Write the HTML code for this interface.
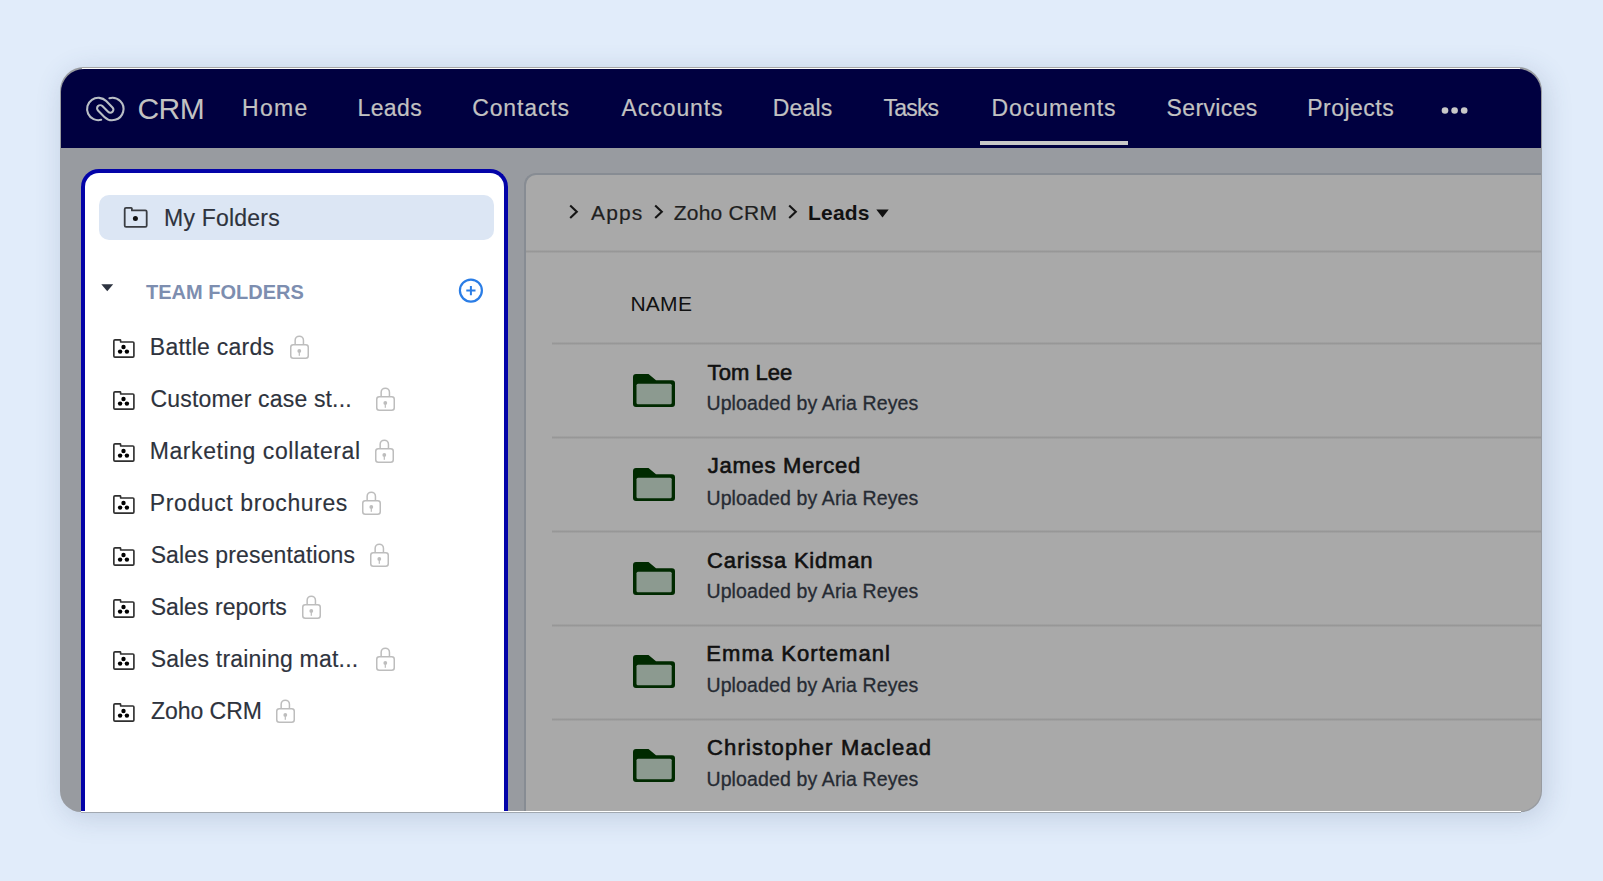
<!DOCTYPE html>
<html><head><meta charset="utf-8"><style>
html,body{margin:0;padding:0;}
body{width:1603px;height:881px;background:#e1ecfa;position:relative;overflow:hidden;font-family:"Liberation Sans", sans-serif;}
.t{position:absolute;white-space:nowrap;line-height:1;}
.frame{position:absolute;left:60px;top:67px;width:1482px;height:745px;border-radius:24px 24px 21px 21px;background:#989ba0;box-shadow:3px 5px 28px rgba(60,80,120,0.2);}
.topline{position:absolute;left:82px;top:67px;width:1438px;height:2px;background:linear-gradient(#a6a6a6 0 50%,#fcfcfa 50%);}
.hdr{position:absolute;left:61px;top:69px;width:1480px;height:79px;border-radius:23px 23px 0 0;background:#000040;}
.uline{position:absolute;left:980px;top:141px;width:148px;height:4px;background:#c8c8c8;}
.side{position:absolute;left:81px;top:169px;width:419px;height:638px;border:4px solid #0303a8;border-bottom:none;border-radius:18px 18px 0 0;background:#fff;box-sizing:content-box;}
.hl{position:absolute;left:99px;top:195px;width:395px;height:45px;border-radius:10px;background:#dce6f4;}
.main{position:absolute;left:524px;top:173px;width:1017px;height:638px;border-left:2px solid #878c93;border-top:2px solid #878c93;border-radius:12px 0 21px 0;box-sizing:border-box;width:1017px;height:638px;background:#a9a9a9;}
.mainr{position:absolute;left:1519px;top:700px;width:22px;height:111px;}
.sep{position:absolute;height:3px;background:linear-gradient(#a5a5a5,#979797,#a5a5a5);}
.bline{position:absolute;left:81px;top:811px;width:1440px;height:1px;background:#fff;}
.bline2{position:absolute;left:81px;top:812px;width:1440px;height:1px;background:rgba(120,120,120,0.5);}
</style></head><body>
<div class="frame"></div>
<div class="topline"></div>
<div class="hdr"></div>
<div class="uline"></div>
<div class="main"></div>
<div class="sep" style="left:526px;top:250px;width:1015px;"></div>
<div class="sep" style="left:552px;top:342px;width:989px;"></div>
<div class="sep" style="left:552px;top:436px;width:989px;"></div>
<div class="sep" style="left:552px;top:530px;width:989px;"></div>
<div class="sep" style="left:552px;top:624px;width:989px;"></div>
<div class="sep" style="left:552px;top:718px;width:989px;"></div>
<div class="side"></div>
<div class="hl"></div>
<div class="bline"></div><div class="bline2"></div>
<svg style="position:absolute;left:84px;top:94px" width="44" height="30" viewBox="0 0 44 30"><path d="M17.2 25.8 A11.2 11.2 0 1 1 22.22 7.08 L28.5 13.4 A3.1 3.1 0 0 1 24.1 17.8 L18.4 12.1 A3.1 3.1 0 0 0 14.0 16.5 L20.38 22.92 A11.2 11.2 0 1 0 25.4 4.18" fill="none" stroke="#b9bec5" stroke-width="2.1" stroke-linecap="round"/></svg>
<svg style="position:absolute;left:1440px;top:106px" width="30" height="10" viewBox="0 0 30 10"><circle cx="5" cy="4.5" r="3.3" fill="#c8c8c8"/><circle cx="14.6" cy="4.5" r="3.3" fill="#c8c8c8"/><circle cx="24.2" cy="4.5" r="3.3" fill="#c8c8c8"/></svg>
<svg style="position:absolute;left:123px;top:206px" width="26" height="23" viewBox="0 0 26 23"><path d="M1.7 3.3 Q1.7 1.9 3.1 1.9 H8.2 Q8.9 1.9 8.9 2.6 V4.4 H22.3 Q23.7 4.4 23.7 5.8 V19.4 Q23.7 20.8 22.3 20.8 H3.1 Q1.7 20.8 1.7 19.4 Z" fill="none" stroke="#3a3d42" stroke-width="1.8" stroke-linejoin="round"/><circle cx="12.4" cy="12.5" r="2.5" fill="#111"/></svg>
<svg style="position:absolute;left:101px;top:284px" width="13" height="8" viewBox="0 0 13 8"><path d="M0.3 0.3 H12.2 L6.25 7.2 Z" fill="#2d3340"/></svg>
<svg style="position:absolute;left:458px;top:278px" width="26" height="26" viewBox="0 0 26 26"><circle cx="12.9" cy="12.6" r="11" fill="none" stroke="#2a7de6" stroke-width="2.2"/><path d="M8.3 12.6 H17.5 M12.9 8 V17.2" stroke="#2a7de6" stroke-width="2"/></svg>
<svg style="position:absolute;left:113px;top:339px" width="22" height="19" viewBox="0 0 22 19"><path d="M0.85 2 Q0.85 0.85 2 0.85 H7 Q7.6 0.85 7.6 1.5 V3 H19.8 Q20.9 3 20.9 4.1 V17 Q20.9 18.1 19.8 18.1 H2 Q0.85 18.1 0.85 17 Z" fill="none" stroke="#2f2f2f" stroke-width="1.65" stroke-linejoin="round"/><circle cx="10.5" cy="8" r="2.2" fill="#000"/><circle cx="7.1" cy="12.6" r="2.2" fill="#000"/><circle cx="13.9" cy="12.6" r="2.2" fill="#000"/></svg>
<svg style="position:absolute;left:113px;top:391px" width="22" height="19" viewBox="0 0 22 19"><path d="M0.85 2 Q0.85 0.85 2 0.85 H7 Q7.6 0.85 7.6 1.5 V3 H19.8 Q20.9 3 20.9 4.1 V17 Q20.9 18.1 19.8 18.1 H2 Q0.85 18.1 0.85 17 Z" fill="none" stroke="#2f2f2f" stroke-width="1.65" stroke-linejoin="round"/><circle cx="10.5" cy="8" r="2.2" fill="#000"/><circle cx="7.1" cy="12.6" r="2.2" fill="#000"/><circle cx="13.9" cy="12.6" r="2.2" fill="#000"/></svg>
<svg style="position:absolute;left:113px;top:443px" width="22" height="19" viewBox="0 0 22 19"><path d="M0.85 2 Q0.85 0.85 2 0.85 H7 Q7.6 0.85 7.6 1.5 V3 H19.8 Q20.9 3 20.9 4.1 V17 Q20.9 18.1 19.8 18.1 H2 Q0.85 18.1 0.85 17 Z" fill="none" stroke="#2f2f2f" stroke-width="1.65" stroke-linejoin="round"/><circle cx="10.5" cy="8" r="2.2" fill="#000"/><circle cx="7.1" cy="12.6" r="2.2" fill="#000"/><circle cx="13.9" cy="12.6" r="2.2" fill="#000"/></svg>
<svg style="position:absolute;left:113px;top:495px" width="22" height="19" viewBox="0 0 22 19"><path d="M0.85 2 Q0.85 0.85 2 0.85 H7 Q7.6 0.85 7.6 1.5 V3 H19.8 Q20.9 3 20.9 4.1 V17 Q20.9 18.1 19.8 18.1 H2 Q0.85 18.1 0.85 17 Z" fill="none" stroke="#2f2f2f" stroke-width="1.65" stroke-linejoin="round"/><circle cx="10.5" cy="8" r="2.2" fill="#000"/><circle cx="7.1" cy="12.6" r="2.2" fill="#000"/><circle cx="13.9" cy="12.6" r="2.2" fill="#000"/></svg>
<svg style="position:absolute;left:113px;top:547px" width="22" height="19" viewBox="0 0 22 19"><path d="M0.85 2 Q0.85 0.85 2 0.85 H7 Q7.6 0.85 7.6 1.5 V3 H19.8 Q20.9 3 20.9 4.1 V17 Q20.9 18.1 19.8 18.1 H2 Q0.85 18.1 0.85 17 Z" fill="none" stroke="#2f2f2f" stroke-width="1.65" stroke-linejoin="round"/><circle cx="10.5" cy="8" r="2.2" fill="#000"/><circle cx="7.1" cy="12.6" r="2.2" fill="#000"/><circle cx="13.9" cy="12.6" r="2.2" fill="#000"/></svg>
<svg style="position:absolute;left:113px;top:599px" width="22" height="19" viewBox="0 0 22 19"><path d="M0.85 2 Q0.85 0.85 2 0.85 H7 Q7.6 0.85 7.6 1.5 V3 H19.8 Q20.9 3 20.9 4.1 V17 Q20.9 18.1 19.8 18.1 H2 Q0.85 18.1 0.85 17 Z" fill="none" stroke="#2f2f2f" stroke-width="1.65" stroke-linejoin="round"/><circle cx="10.5" cy="8" r="2.2" fill="#000"/><circle cx="7.1" cy="12.6" r="2.2" fill="#000"/><circle cx="13.9" cy="12.6" r="2.2" fill="#000"/></svg>
<svg style="position:absolute;left:113px;top:651px" width="22" height="19" viewBox="0 0 22 19"><path d="M0.85 2 Q0.85 0.85 2 0.85 H7 Q7.6 0.85 7.6 1.5 V3 H19.8 Q20.9 3 20.9 4.1 V17 Q20.9 18.1 19.8 18.1 H2 Q0.85 18.1 0.85 17 Z" fill="none" stroke="#2f2f2f" stroke-width="1.65" stroke-linejoin="round"/><circle cx="10.5" cy="8" r="2.2" fill="#000"/><circle cx="7.1" cy="12.6" r="2.2" fill="#000"/><circle cx="13.9" cy="12.6" r="2.2" fill="#000"/></svg>
<svg style="position:absolute;left:113px;top:703px" width="22" height="19" viewBox="0 0 22 19"><path d="M0.85 2 Q0.85 0.85 2 0.85 H7 Q7.6 0.85 7.6 1.5 V3 H19.8 Q20.9 3 20.9 4.1 V17 Q20.9 18.1 19.8 18.1 H2 Q0.85 18.1 0.85 17 Z" fill="none" stroke="#2f2f2f" stroke-width="1.65" stroke-linejoin="round"/><circle cx="10.5" cy="8" r="2.2" fill="#000"/><circle cx="7.1" cy="12.6" r="2.2" fill="#000"/><circle cx="13.9" cy="12.6" r="2.2" fill="#000"/></svg>
<svg style="position:absolute;left:290px;top:335px" width="19" height="24" viewBox="0 0 19 24"><rect x="0.75" y="9.75" width="17.5" height="13.5" rx="2.5" fill="none" stroke="#bdbdbd" stroke-width="1.5"/><path d="M5.15 9.75 V5.3 A4.15 4.15 0 0 1 13.45 5.3 V9.75" fill="none" stroke="#bdbdbd" stroke-width="1.5"/><circle cx="9.3" cy="15.9" r="1.9" fill="#bdbdbd"/><rect x="8.7" y="16" width="1.2" height="4.8" fill="#bdbdbd"/></svg>
<svg style="position:absolute;left:376px;top:387px" width="19" height="24" viewBox="0 0 19 24"><rect x="0.75" y="9.75" width="17.5" height="13.5" rx="2.5" fill="none" stroke="#bdbdbd" stroke-width="1.5"/><path d="M5.15 9.75 V5.3 A4.15 4.15 0 0 1 13.45 5.3 V9.75" fill="none" stroke="#bdbdbd" stroke-width="1.5"/><circle cx="9.3" cy="15.9" r="1.9" fill="#bdbdbd"/><rect x="8.7" y="16" width="1.2" height="4.8" fill="#bdbdbd"/></svg>
<svg style="position:absolute;left:375px;top:439px" width="19" height="24" viewBox="0 0 19 24"><rect x="0.75" y="9.75" width="17.5" height="13.5" rx="2.5" fill="none" stroke="#bdbdbd" stroke-width="1.5"/><path d="M5.15 9.75 V5.3 A4.15 4.15 0 0 1 13.45 5.3 V9.75" fill="none" stroke="#bdbdbd" stroke-width="1.5"/><circle cx="9.3" cy="15.9" r="1.9" fill="#bdbdbd"/><rect x="8.7" y="16" width="1.2" height="4.8" fill="#bdbdbd"/></svg>
<svg style="position:absolute;left:362px;top:491px" width="19" height="24" viewBox="0 0 19 24"><rect x="0.75" y="9.75" width="17.5" height="13.5" rx="2.5" fill="none" stroke="#bdbdbd" stroke-width="1.5"/><path d="M5.15 9.75 V5.3 A4.15 4.15 0 0 1 13.45 5.3 V9.75" fill="none" stroke="#bdbdbd" stroke-width="1.5"/><circle cx="9.3" cy="15.9" r="1.9" fill="#bdbdbd"/><rect x="8.7" y="16" width="1.2" height="4.8" fill="#bdbdbd"/></svg>
<svg style="position:absolute;left:370px;top:543px" width="19" height="24" viewBox="0 0 19 24"><rect x="0.75" y="9.75" width="17.5" height="13.5" rx="2.5" fill="none" stroke="#bdbdbd" stroke-width="1.5"/><path d="M5.15 9.75 V5.3 A4.15 4.15 0 0 1 13.45 5.3 V9.75" fill="none" stroke="#bdbdbd" stroke-width="1.5"/><circle cx="9.3" cy="15.9" r="1.9" fill="#bdbdbd"/><rect x="8.7" y="16" width="1.2" height="4.8" fill="#bdbdbd"/></svg>
<svg style="position:absolute;left:302px;top:595px" width="19" height="24" viewBox="0 0 19 24"><rect x="0.75" y="9.75" width="17.5" height="13.5" rx="2.5" fill="none" stroke="#bdbdbd" stroke-width="1.5"/><path d="M5.15 9.75 V5.3 A4.15 4.15 0 0 1 13.45 5.3 V9.75" fill="none" stroke="#bdbdbd" stroke-width="1.5"/><circle cx="9.3" cy="15.9" r="1.9" fill="#bdbdbd"/><rect x="8.7" y="16" width="1.2" height="4.8" fill="#bdbdbd"/></svg>
<svg style="position:absolute;left:376px;top:647px" width="19" height="24" viewBox="0 0 19 24"><rect x="0.75" y="9.75" width="17.5" height="13.5" rx="2.5" fill="none" stroke="#bdbdbd" stroke-width="1.5"/><path d="M5.15 9.75 V5.3 A4.15 4.15 0 0 1 13.45 5.3 V9.75" fill="none" stroke="#bdbdbd" stroke-width="1.5"/><circle cx="9.3" cy="15.9" r="1.9" fill="#bdbdbd"/><rect x="8.7" y="16" width="1.2" height="4.8" fill="#bdbdbd"/></svg>
<svg style="position:absolute;left:276px;top:699px" width="19" height="24" viewBox="0 0 19 24"><rect x="0.75" y="9.75" width="17.5" height="13.5" rx="2.5" fill="none" stroke="#bdbdbd" stroke-width="1.5"/><path d="M5.15 9.75 V5.3 A4.15 4.15 0 0 1 13.45 5.3 V9.75" fill="none" stroke="#bdbdbd" stroke-width="1.5"/><circle cx="9.3" cy="15.9" r="1.9" fill="#bdbdbd"/><rect x="8.7" y="16" width="1.2" height="4.8" fill="#bdbdbd"/></svg>
<svg style="position:absolute;left:568px;top:204px" width="11" height="16" viewBox="0 0 11 16"><path d="M2.2 1.4 L8.8 7.7 L2.2 14" fill="none" stroke="#151515" stroke-width="2.1"/></svg>
<svg style="position:absolute;left:653px;top:204px" width="11" height="16" viewBox="0 0 11 16"><path d="M2.2 1.4 L8.8 7.7 L2.2 14" fill="none" stroke="#151515" stroke-width="2.1"/></svg>
<svg style="position:absolute;left:787px;top:204px" width="11" height="16" viewBox="0 0 11 16"><path d="M2.2 1.4 L8.8 7.7 L2.2 14" fill="none" stroke="#151515" stroke-width="2.1"/></svg>
<svg style="position:absolute;left:876px;top:209px" width="13" height="9" viewBox="0 0 13 9"><path d="M0.3 0.5 H12.7 L6.5 8.5 Z" fill="#111"/></svg>
<svg style="position:absolute;left:633px;top:374px" width="42" height="34" viewBox="0 0 42 34"><path d="M3 0 H15.5 L23 6.2 H39 Q42 6.2 42 9.2 V30 Q42 33 39 33 H3 Q0 33 0 30 V3 Q0 0 3 0 Z" fill="#002a00"/><rect x="3.5" y="9.7" width="35.2" height="20.5" rx="1.5" fill="#8c9a90"/></svg>
<svg style="position:absolute;left:633px;top:468px" width="42" height="34" viewBox="0 0 42 34"><path d="M3 0 H15.5 L23 6.2 H39 Q42 6.2 42 9.2 V30 Q42 33 39 33 H3 Q0 33 0 30 V3 Q0 0 3 0 Z" fill="#002a00"/><rect x="3.5" y="9.7" width="35.2" height="20.5" rx="1.5" fill="#8c9a90"/></svg>
<svg style="position:absolute;left:633px;top:562px" width="42" height="34" viewBox="0 0 42 34"><path d="M3 0 H15.5 L23 6.2 H39 Q42 6.2 42 9.2 V30 Q42 33 39 33 H3 Q0 33 0 30 V3 Q0 0 3 0 Z" fill="#002a00"/><rect x="3.5" y="9.7" width="35.2" height="20.5" rx="1.5" fill="#8c9a90"/></svg>
<svg style="position:absolute;left:633px;top:655px" width="42" height="34" viewBox="0 0 42 34"><path d="M3 0 H15.5 L23 6.2 H39 Q42 6.2 42 9.2 V30 Q42 33 39 33 H3 Q0 33 0 30 V3 Q0 0 3 0 Z" fill="#002a00"/><rect x="3.5" y="9.7" width="35.2" height="20.5" rx="1.5" fill="#8c9a90"/></svg>
<svg style="position:absolute;left:633px;top:749px" width="42" height="34" viewBox="0 0 42 34"><path d="M3 0 H15.5 L23 6.2 H39 Q42 6.2 42 9.2 V30 Q42 33 39 33 H3 Q0 33 0 30 V3 Q0 0 3 0 Z" fill="#002a00"/><rect x="3.5" y="9.7" width="35.2" height="20.5" rx="1.5" fill="#8c9a90"/></svg>
<div class="t" style="left:137.38px;top:94.40px;font-size:30px;color:#c2c2c2;letter-spacing:-0.468px;">CRM</div>
<div class="t" style="left:242.01px;top:97.00px;font-size:23px;color:#c2c2c2;letter-spacing:1.319px;-webkit-text-stroke:0.2px #c2c2c2;">Home</div>
<div class="t" style="left:357.61px;top:97.00px;font-size:23px;color:#c2c2c2;letter-spacing:0.338px;-webkit-text-stroke:0.2px #c2c2c2;">Leads</div>
<div class="t" style="left:472.23px;top:97.00px;font-size:23px;color:#c2c2c2;letter-spacing:0.876px;-webkit-text-stroke:0.2px #c2c2c2;">Contacts</div>
<div class="t" style="left:621.56px;top:97.00px;font-size:23px;color:#c2c2c2;letter-spacing:0.924px;-webkit-text-stroke:0.2px #c2c2c2;">Accounts</div>
<div class="t" style="left:772.71px;top:97.00px;font-size:23px;color:#c2c2c2;letter-spacing:0.204px;-webkit-text-stroke:0.2px #c2c2c2;">Deals</div>
<div class="t" style="left:883.58px;top:97.00px;font-size:23px;color:#c2c2c2;letter-spacing:-0.823px;-webkit-text-stroke:0.2px #c2c2c2;">Tasks</div>
<div class="t" style="left:991.51px;top:97.00px;font-size:23px;color:#c2c2c2;letter-spacing:0.962px;-webkit-text-stroke:0.2px #c2c2c2;">Documents</div>
<div class="t" style="left:1166.56px;top:97.00px;font-size:23px;color:#c2c2c2;letter-spacing:0.369px;-webkit-text-stroke:0.2px #c2c2c2;">Services</div>
<div class="t" style="left:1307.21px;top:97.00px;font-size:23px;color:#c2c2c2;letter-spacing:0.491px;-webkit-text-stroke:0.2px #c2c2c2;">Projects</div>
<div class="t" style="left:164.09px;top:206.60px;font-size:23px;color:#2e333d;letter-spacing:0.214px;-webkit-text-stroke:0.15px #2e333d;">My Folders</div>
<div class="t" style="left:145.98px;top:281.80px;font-size:20px;color:#7d8eb0;font-weight:bold;letter-spacing:0.012px;">TEAM FOLDERS</div>
<div class="t" style="left:149.79px;top:336.00px;font-size:23px;color:#2e333d;letter-spacing:0.256px;-webkit-text-stroke:0.15px #2e333d;">Battle cards</div>
<div class="t" style="left:150.51px;top:388.00px;font-size:23px;color:#2e333d;letter-spacing:0.167px;-webkit-text-stroke:0.15px #2e333d;">Customer case st...</div>
<div class="t" style="left:149.79px;top:440.00px;font-size:23px;color:#2e333d;letter-spacing:0.571px;-webkit-text-stroke:0.15px #2e333d;">Marketing collateral</div>
<div class="t" style="left:149.79px;top:492.00px;font-size:23px;color:#2e333d;letter-spacing:0.602px;-webkit-text-stroke:0.15px #2e333d;">Product brochures</div>
<div class="t" style="left:150.64px;top:544.00px;font-size:23px;color:#2e333d;letter-spacing:0.134px;-webkit-text-stroke:0.15px #2e333d;">Sales presentations</div>
<div class="t" style="left:150.64px;top:596.00px;font-size:23px;color:#2e333d;letter-spacing:0.060px;-webkit-text-stroke:0.15px #2e333d;">Sales reports</div>
<div class="t" style="left:150.64px;top:648.00px;font-size:23px;color:#2e333d;letter-spacing:0.212px;-webkit-text-stroke:0.15px #2e333d;">Sales training mat...</div>
<div class="t" style="left:150.95px;top:700.00px;font-size:23px;color:#2e333d;letter-spacing:-0.032px;-webkit-text-stroke:0.15px #2e333d;">Zoho CRM</div>
<div class="t" style="left:591.06px;top:201.50px;font-size:21px;color:#1f1f1f;letter-spacing:1.145px;-webkit-text-stroke:0.2px #1f1f1f;">Apps</div>
<div class="t" style="left:673.63px;top:201.50px;font-size:21px;color:#1f1f1f;letter-spacing:0.252px;-webkit-text-stroke:0.2px #1f1f1f;">Zoho CRM</div>
<div class="t" style="left:808.10px;top:201.50px;font-size:21px;color:#111;font-weight:bold;letter-spacing:0.168px;">Leads</div>
<div class="t" style="left:630.38px;top:292.60px;font-size:21px;color:#111;letter-spacing:0.284px;">NAME</div>
<div class="t" style="left:707.61px;top:362.00px;font-size:22px;color:#111;letter-spacing:0.042px;-webkit-text-stroke:0.6px #111;">Tom Lee</div>
<div class="t" style="left:706.45px;top:394.30px;font-size:19.5px;color:#262b33;letter-spacing:0.125px;-webkit-text-stroke:0.3px #262b33;">Uploaded by Aria Reyes</div>
<div class="t" style="left:707.76px;top:455.10px;font-size:22px;color:#111;letter-spacing:0.736px;-webkit-text-stroke:0.6px #111;">James Merced</div>
<div class="t" style="left:706.45px;top:489.00px;font-size:19.5px;color:#262b33;letter-spacing:0.125px;-webkit-text-stroke:0.3px #262b33;">Uploaded by Aria Reyes</div>
<div class="t" style="left:706.98px;top:549.70px;font-size:22px;color:#111;letter-spacing:0.782px;-webkit-text-stroke:0.6px #111;">Carissa Kidman</div>
<div class="t" style="left:706.45px;top:582.40px;font-size:19.5px;color:#262b33;letter-spacing:0.125px;-webkit-text-stroke:0.3px #262b33;">Uploaded by Aria Reyes</div>
<div class="t" style="left:706.30px;top:643.00px;font-size:22px;color:#111;letter-spacing:1.057px;-webkit-text-stroke:0.6px #111;">Emma Kortemanl</div>
<div class="t" style="left:706.45px;top:676.40px;font-size:19.5px;color:#262b33;letter-spacing:0.125px;-webkit-text-stroke:0.3px #262b33;">Uploaded by Aria Reyes</div>
<div class="t" style="left:706.98px;top:736.50px;font-size:22px;color:#111;letter-spacing:1.175px;-webkit-text-stroke:0.6px #111;">Christopher Maclead</div>
<div class="t" style="left:706.45px;top:769.70px;font-size:19.5px;color:#262b33;letter-spacing:0.125px;-webkit-text-stroke:0.3px #262b33;">Uploaded by Aria Reyes</div>
</body></html>
